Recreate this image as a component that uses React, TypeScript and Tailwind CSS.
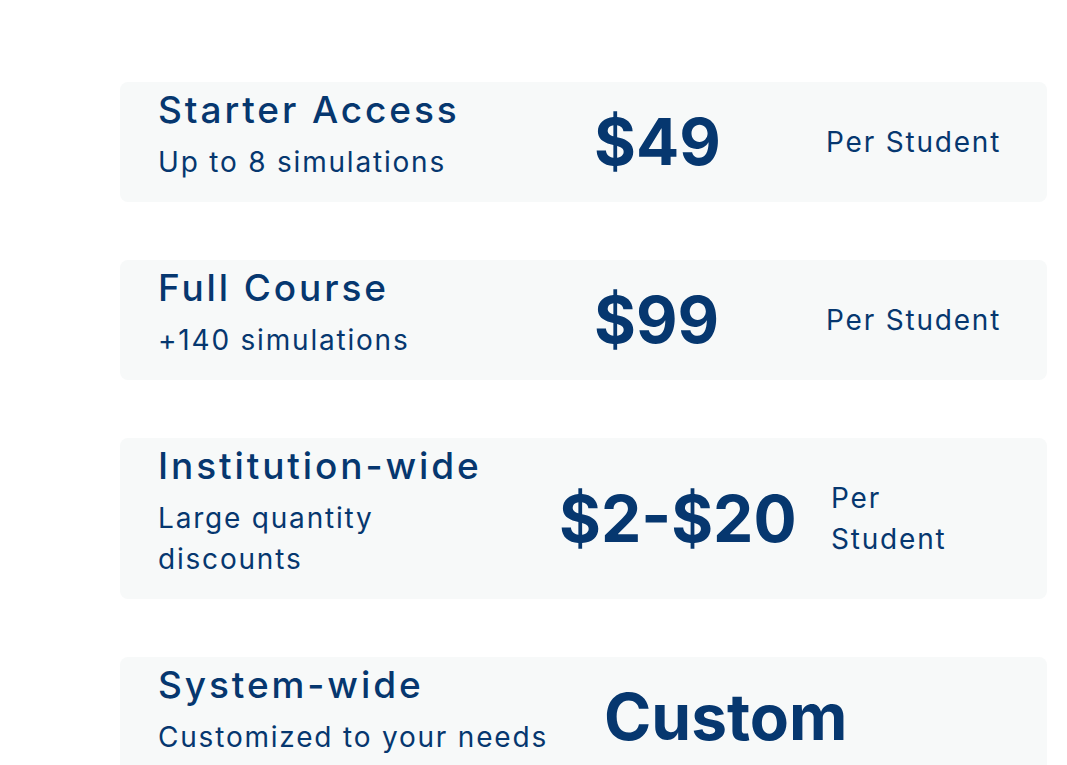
import React from "react";

type Plan = {
  title: string;
  sub: string;
  price: string;
  per?: string;
  leftW: string;
  subW: string;
  priceW: string;
  perW: string;
};

const plans: Plan[] = [
  {
    title: "Starter Access",
    sub: "Up to 8 simulations",
    price: "$49",
    per: "Per Student",
    leftW: "w-[436px]",
    subW: "",
    priceW: "w-[232px]",
    perW: "",
  },
  {
    title: "Full Course",
    sub: "+140 simulations",
    price: "$99",
    per: "Per Student",
    leftW: "w-[436px]",
    subW: "",
    priceW: "w-[232px]",
    perW: "",
  },
  {
    title: "Institution-wide",
    sub: "Large quantity discounts",
    price: "$2-$20",
    per: "Per Student",
    leftW: "w-[401px]",
    subW: "max-w-[330px]",
    priceW: "w-[272px]",
    perW: "max-w-[150px]",
  },
  {
    title: "System-wide",
    sub: "Customized to your needs",
    price: "Custom",
    leftW: "w-[446px]",
    subW: "",
    priceW: "w-[300px]",
    perW: "",
  },
];

const App = () => {
  return (
    <div className="min-h-screen bg-white pt-[82px] pl-[120px] pr-[20px] pb-10 font-['Inter',sans-serif] text-[#06376f]">
      <div className="flex flex-col gap-[58px]">
        {plans.map((p, i) => (
          <div
            key={i}
            className="flex items-center rounded-lg bg-[#f7f9f9] pl-[38px] pr-[20px] py-[8px]"
          >
            {/* Name + description */}
            <div className={`${p.leftW} shrink-0 pb-[11px]`}>
              <h3 className="text-[37px] font-medium leading-[40px] tracking-[2.9px]">
                {p.title}
              </h3>
              <p className={`mt-3 text-[28px] leading-[41px] tracking-[1.8px] ${p.subW}`}>
                {p.sub}
              </p>
            </div>

            {/* Price */}
            <div className={`${p.priceW} shrink-0 whitespace-nowrap`}>
              <span className="text-[64px] font-bold leading-none">{p.price}</span>
            </div>

            {/* Unit */}
            {p.per && (
              <p className={`text-[28px] leading-[41px] tracking-[1.8px] ${p.perW}`}>
                {p.per}
              </p>
            )}
          </div>
        ))}
      </div>
    </div>
  );
};

export default App;
